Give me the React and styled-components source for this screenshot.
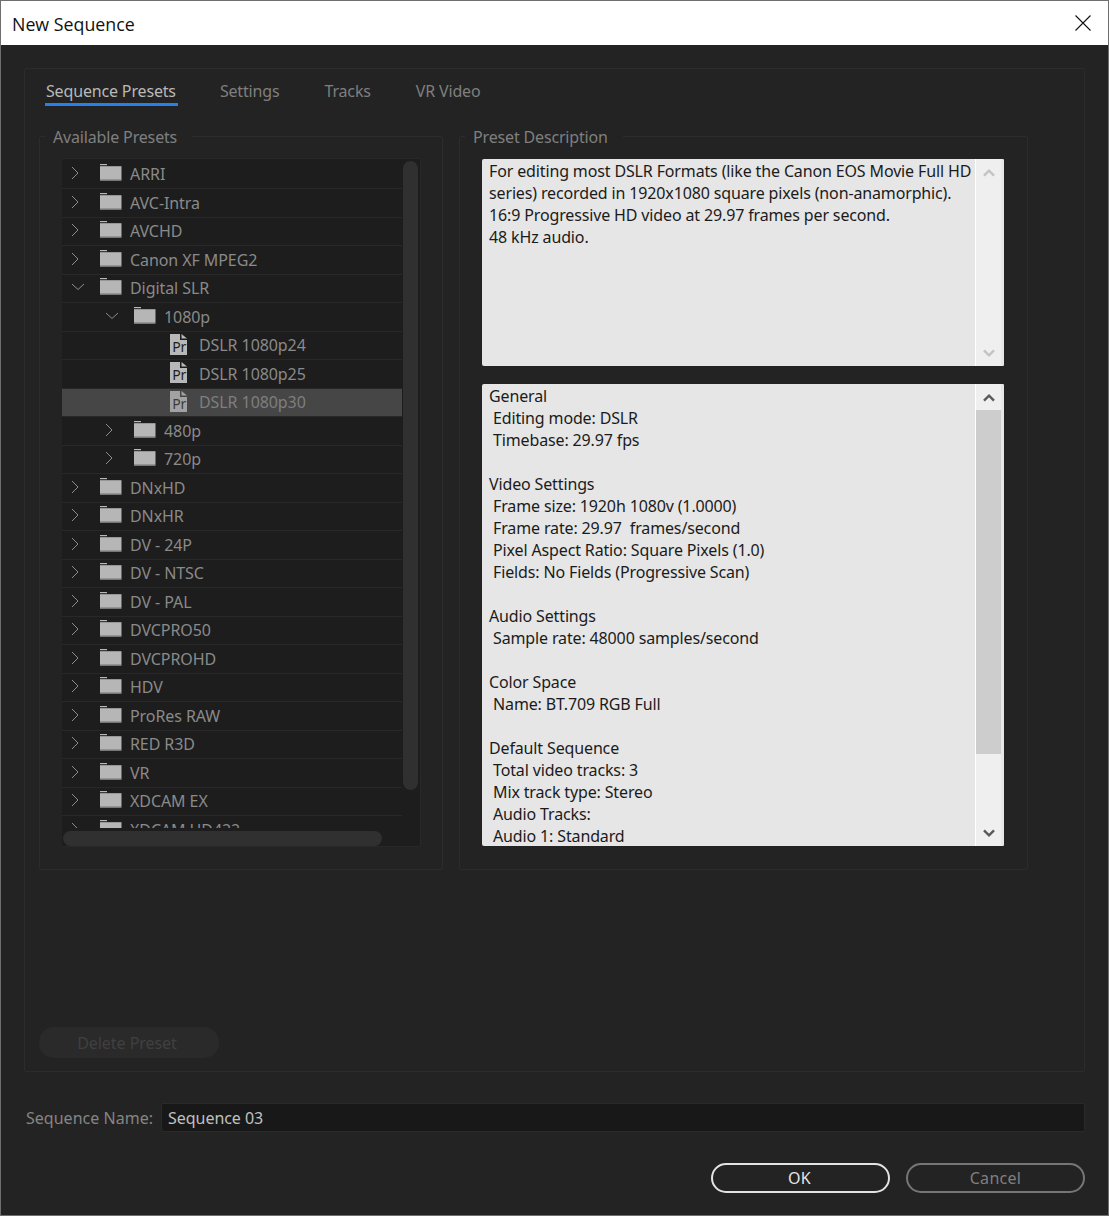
import React from "react";
import styled, { createGlobalStyle } from "styled-components";

const Global = createGlobalStyle`
  html, body { margin: 0; padding: 0; background: #232323; }
  * { box-sizing: border-box; }
`;

const FONT = `"Noto Sans", "Open Sans", sans-serif`;

const Window = styled.div`
  width: 1109px;
  height: 1216px;
  display: flex;
  flex-direction: column;
  background: #232323;
  border: 1px solid #6f6f6f;
  font-family: ${FONT};
  font-size: 16px;
`;
const TitleBar = styled.header`
  flex: none;
  height: 44px;
  background: #fff;
  display: flex;
  align-items: center;
  justify-content: space-between;
  padding: 2px 16px 0 11px;
  color: #111;
  font-family: "Open Sans", sans-serif;
  font-size: 17.8px;
`;
const CloseButton = styled.button`
  width: 18px;
  height: 18px;
  margin-top: -2px;
  padding: 0;
  border: 0;
  background: none;
  display: block;
`;
const Content = styled.div`
  flex: 1;
  display: flex;
  flex-direction: column;
  padding: 23px 23px 0;
`;
const Panel = styled.section`
  height: 1004px;
  flex: none;
  border: 1px solid #2c2c2c;
  border-radius: 2px;
  padding: 9px 14px 0;
  display: flex;
  flex-direction: column;
`;
const Tabs = styled.nav`
  display: flex;
  gap: 43px;
  padding-left: 6px;
  height: 30px;
`;
const Tab = styled.div`
  height: 28px;
  padding: 2px ${(p) => (p.$active ? 2 : 1)}px 0 1px;
  margin-right: ${(p) => (p.$active ? -2 : 0)}px;
  line-height: 22px;
  font-size: 16px;
  letter-spacing: -0.16px;
  color: ${(p) => (p.$active ? "#b9b9b9" : "#7f7f7f")};
  border-bottom: 3px solid ${(p) => (p.$active ? "#2680eb" : "transparent")};
`;
const Columns = styled.div`
  margin-top: 16px;
  display: flex;
  gap: 16px;
  align-items: flex-start;
`;
const Group = styled.fieldset`
  margin: 0;
  min-width: 0;
  width: ${(p) => p.$w}px;
  height: 746px;
  border: 1px solid #2c2c2c;
  border-radius: 2px;
  padding: 0 ${(p) => p.$pr}px 0 ${(p) => p.$pl}px;
`;
const Legend = styled.legend`
  margin-left: -17px;
  padding: 2px 15px 0 8px;
  font-size: 16px;
  letter-spacing: -0.16px;
  line-height: 22px;
  color: #7f7f7f;
`;
const Tree = styled.div`
  margin-top: 10px;
  height: 689px;
  width: 359px;
  background: #1d1d1d;
  border: 1px solid #282828;
  border-left: 0;
  border-radius: 2px;
  display: flex;
  flex-direction: column;
`;
const TreeBody = styled.div`
  flex: 1;
  min-height: 0;
  display: flex;
  overflow: hidden;
`;
const Rows = styled.div`
  width: 340px;
  flex: none;
  padding-top: 1.5px;
`;
const Row = styled.div`
  height: 28.5px;
  display: flex;
  align-items: center;
  padding-left: ${(p) => p.$level * 34}px;
  border-bottom: 1px solid #282828;
  background: ${(p) => (p.$selected ? "#464646" : "transparent")};
  color: ${(p) => (p.$selected ? "#7e7e7e" : "#8a8a8a")};
  font-size: 16px;
  letter-spacing: -0.08px;
  white-space: nowrap;
`;
const Twisty = styled.span`
  flex: none;
  width: 38px;
  height: 100%;
  display: flex;
  align-items: center;
  padding-left: 9px;
  svg { display: block; margin-top: -2px; }
`;
const FileSlot = styled.span`
  flex: none;
  width: 39px;
`;
const IconSlot = styled.span`
  flex: none;
  width: 30px;
  display: flex;
  svg { display: block; margin-top: -2px; }
`;
const Label = styled.span`
  display: block;
`;
const VTrack = styled.div`
  flex: 1;
  padding: 2px 2px 0 1px;
`;
const VThumb = styled.div`
  height: 629px;
  width: 15px;
  border-radius: 8px;
  background: #303030;
`;
const HTrack = styled.div`
  flex: none;
  height: 18px;
  padding: 3px 0 0 1px;
`;
const HThumb = styled.div`
  width: 319px;
  height: 15px;
  border-radius: 8px;
  background: #303030;
`;
const TextBox = styled.div`
  width: 522px;
  height: ${(p) => p.$h}px;
  margin-top: ${(p) => p.$mt}px;
  display: flex;
  background: #e6e6e6;
  border-radius: 2px;
  overflow: hidden;
`;
const TextContent = styled.div`
  flex: 1;
  min-width: 0;
  padding: 1px 0 0 7px;
  color: #1b1b1b;
  font-size: 16px;
  letter-spacing: -0.14px;
  line-height: 22px;
  white-space: pre;
  overflow: hidden;
`;
const ScrollBar = styled.div`
  flex: none;
  width: 29px;
  display: flex;
  flex-direction: column;
  align-items: stretch;
  background: #efefef;
  border-left: 1px solid #fff;
  border-right: 3px solid #e6e6e6;
`;
const Arrow = styled.div`
  height: 26px;
  flex: none;
  display: flex;
  align-items: center;
  justify-content: center;
`;
const ScrollSpace = styled.div`
  flex: 1;
  min-height: 0;
`;
const ScrollThumb = styled.div`
  flex: none;
  height: 344px;
  background: #cdcdcd;
`;
const NameRow = styled.div`
  margin: 31px 0 0 2px;
  display: flex;
  align-items: center;
  gap: 8px;
`;
const NameLabel = styled.label`
  color: #858585;
  font-size: 16px;
  letter-spacing: 0.02px;
`;
const NameInput = styled.div`
  flex: 1;
  height: 29px;
  background: #181818;
  border: 1px solid #2a2a2a;
  border-radius: 2px;
  color: #c0c0c0;
  padding: 3px 6px 0;
  font-size: 16px;
  letter-spacing: -0.04px;
`;
const Actions = styled.div`
  margin-top: 31px;
  display: flex;
  justify-content: flex-end;
  gap: 16px;
`;
const PillButton = styled.button`
  width: 179px;
  height: 30px;
  padding: 0 ${(p) => (p.$primary ? 2 : 0)}px 1px 0;
  border-radius: 15px;
  background: transparent;
  border: 2px solid ${(p) => (p.$primary ? "#e3e3e3" : "#767676")};
  color: ${(p) => (p.$primary ? "#e3e3e3" : "#7f7f7f")};
  font-family: ${FONT};
  font-size: 16px;
  letter-spacing: 0.3px;
`;
const PanelFooter = styled.div`
  margin: auto 0 13px 0;
`;
const DeleteButton = styled.button`
  width: 180px;
  height: 31px;
  padding: 0 4px 0 0;
  border: 0;
  border-radius: 15px;
  background: #2a2a2a;
  color: #404040;
  font-family: ${FONT};
  font-size: 16px;
  letter-spacing: -0.05px;
`;

const Chevron = ({ open }) =>
  open ? (
    <svg width="14" height="8" viewBox="0 0 14 8" fill="none" stroke="#8c8c8c" strokeWidth="1">
      <path d="M1 1l6 5.5L13 1" />
    </svg>
  ) : (
    <svg width="8" height="14" viewBox="0 0 8 14" fill="none" stroke="#8c8c8c" strokeWidth="1">
      <path d="M1 1l6 6-6 6" />
    </svg>
  );

const Folder = () => (
  <svg width="22" height="18" viewBox="0 0 22 18">
    <rect x="0" y="0" width="7" height="1.2" fill="#b8b8b8" />
    <rect x="0" y="2.2" width="21.5" height="13.6" fill="#b6b6b6" />
    <rect x="0" y="15.8" width="21.5" height="1" fill="#8e8e8e" />
  </svg>
);

const PrFile = ({ dim }) => {
  const page = dim ? "#a2a2a2" : "#b8b8b8";
  return (
    <svg width="19" height="23" viewBox="0 0 19 23">
      <path d="M1 1h10v6h7v15H1z" fill={page} />
      <path d="M12.5 1l5.5 4.6h-5.5z" fill={page} />
      <text
        x="3.2"
        y="19"
        fontFamily="Noto Sans, sans-serif"
        fontSize="14"
        fill={dim ? "#3c3c3c" : "#1e1e1e"}
      >
        Pr
      </text>
    </svg>
  );
};

const BoxArrow = ({ up, dim }) => (
  <svg width="12" height="9" viewBox="0 0 12 9" fill="none" stroke={dim ? "#c4c4c4" : "#5a5a5a"} strokeWidth="2.4">
    <path d={up ? "M1 7.6l5-5 5 5" : "M1 1.4l5 5 5-5"} />
  </svg>
);

const TREE = [
  { l: 0, t: "ARRI" }, { l: 0, t: "AVC-Intra" }, { l: 0, t: "AVCHD" }, { l: 0, t: "Canon XF MPEG2" },
  { l: 0, t: "Digital SLR", open: true }, { l: 1, t: "1080p", open: true },
  { l: 2, t: "DSLR 1080p24", file: true }, { l: 2, t: "DSLR 1080p25", file: true },
  { l: 2, t: "DSLR 1080p30", file: true, selected: true },
  { l: 1, t: "480p" }, { l: 1, t: "720p" },
  { l: 0, t: "DNxHD" }, { l: 0, t: "DNxHR" }, { l: 0, t: "DV - 24P" }, { l: 0, t: "DV - NTSC" },
  { l: 0, t: "DV - PAL" }, { l: 0, t: "DVCPRO50" }, { l: 0, t: "DVCPROHD" }, { l: 0, t: "HDV" },
  { l: 0, t: "ProRes RAW" }, { l: 0, t: "RED R3D" }, { l: 0, t: "VR" }, { l: 0, t: "XDCAM EX" },
  { l: 0, t: "XDCAM HD422" },
];

const DESC = `For editing most DSLR Formats (like the Canon EOS Movie Full HD
series) recorded in 1920x1080 square pixels (non-anamorphic).
16:9 Progressive HD video at 29.97 frames per second.
48 kHz audio.`;

const DETAILS = `General
 Editing mode: DSLR
 Timebase: 29.97 fps

Video Settings
 Frame size: 1920h 1080v (1.0000)
 Frame rate: 29.97  frames/second
 Pixel Aspect Ratio: Square Pixels (1.0)
 Fields: No Fields (Progressive Scan)

Audio Settings
 Sample rate: 48000 samples/second

Color Space
 Name: BT.709 RGB Full

Default Sequence
 Total video tracks: 3
 Mix track type: Stereo
 Audio Tracks:
 Audio 1: Standard`;

export default function App() {
  return (
    <Window>
      <Global />
      <TitleBar>
        <span>New Sequence</span>
        <CloseButton aria-label="Close">
          <svg width="18" height="18" viewBox="0 0 18 18" stroke="#111" strokeWidth="1.1" fill="none">
            <path d="M1.5 1.5l15 15M16.5 1.5l-15 15" />
          </svg>
        </CloseButton>
      </TitleBar>
      <Content>
        <Panel>
          <Tabs>
            <Tab $active>Sequence Presets</Tab>
            <Tab>Settings</Tab>
            <Tab>Tracks</Tab>
            <Tab>VR Video</Tab>
          </Tabs>
          <Columns>
            <Group $w={404} $pl={22} $pr={21}>
              <Legend>Available Presets</Legend>
              <Tree>
                <TreeBody>
                  <Rows>
                    {TREE.map((r) => (
                      <Row key={r.t} $level={r.l} $selected={r.selected}>
                        {r.file ? (
                          <FileSlot />
                        ) : (
                          <Twisty>
                            <Chevron open={r.open} />
                          </Twisty>
                        )}
                        <IconSlot>{r.file ? <PrFile dim={r.selected} /> : <Folder />}</IconSlot>
                        <Label>{r.t}</Label>
                      </Row>
                    ))}
                  </Rows>
                  <VTrack>
                    <VThumb />
                  </VTrack>
                </TreeBody>
                <HTrack>
                  <HThumb />
                </HTrack>
              </Tree>
            </Group>
            <Group $w={569} $pl={22} $pr={23}>
              <Legend>Preset Description</Legend>
              <TextBox $h={207} $mt={11}>
                <TextContent>{DESC}</TextContent>
                <ScrollBar>
                  <Arrow>
                    <BoxArrow up dim />
                  </Arrow>
                  <ScrollSpace />
                  <Arrow>
                    <BoxArrow dim />
                  </Arrow>
                </ScrollBar>
              </TextBox>
              <TextBox $h={462} $mt={18}>
                <TextContent>{DETAILS}</TextContent>
                <ScrollBar>
                  <Arrow>
                    <BoxArrow up />
                  </Arrow>
                  <ScrollThumb />
                  <ScrollSpace />
                  <Arrow>
                    <BoxArrow />
                  </Arrow>
                </ScrollBar>
              </TextBox>
            </Group>
          </Columns>
          <PanelFooter>
            <DeleteButton>Delete Preset</DeleteButton>
          </PanelFooter>
        </Panel>
        <NameRow>
          <NameLabel>Sequence Name:</NameLabel>
          <NameInput>Sequence 03</NameInput>
        </NameRow>
        <Actions>
          <PillButton $primary>OK</PillButton>
          <PillButton>Cancel</PillButton>
        </Actions>
      </Content>
    </Window>
  );
}
